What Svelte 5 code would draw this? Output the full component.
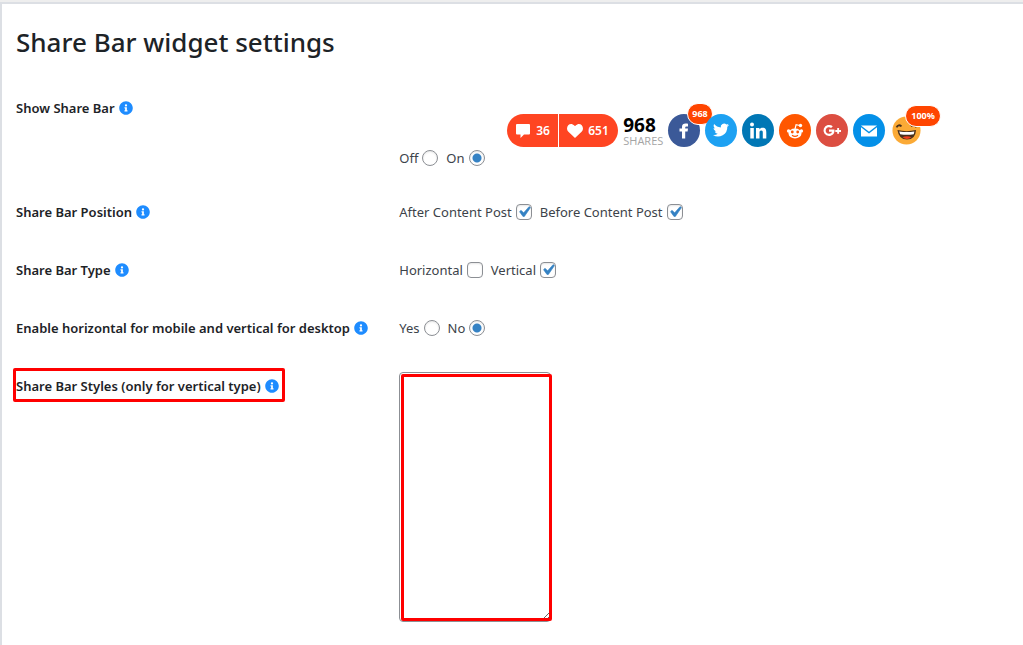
<script lang="ts">
  interface Option {
    label: string;
    value: string;
  }

  interface Setting {
    id: string;
    title: string;
    type: 'radio' | 'checkbox';
    options: Option[];
    preview?: boolean;
  }

  const settings: Setting[] = [
    {
      id: 'show',
      title: 'Show Share Bar',
      type: 'radio',
      options: [
        { label: 'Off', value: 'off' },
        { label: 'On', value: 'on' },
      ],
      preview: true,
    },
    {
      id: 'position',
      title: 'Share Bar Position',
      type: 'checkbox',
      options: [
        { label: 'After Content Post', value: 'after' },
        { label: 'Before Content Post', value: 'before' },
      ],
    },
    {
      id: 'type',
      title: 'Share Bar Type',
      type: 'checkbox',
      options: [
        { label: 'Horizontal', value: 'horizontal' },
        { label: 'Vertical', value: 'vertical' },
      ],
    },
    {
      id: 'responsive',
      title: 'Enable horizontal for mobile and vertical for desktop',
      type: 'radio',
      options: [
        { label: 'Yes', value: 'yes' },
        { label: 'No', value: 'no' },
      ],
    },
  ];

  let selected: Record<string, string[]> = $state({
    show: ['on'],
    position: ['after', 'before'],
    type: ['vertical'],
    responsive: ['no'],
  });
  let styles = $state('');

  function toggle(s: Setting, value: string) {
    if (s.type === 'radio') {
      selected[s.id] = [value];
    } else if (selected[s.id].includes(value)) {
      selected[s.id] = selected[s.id].filter((v) => v !== value);
    } else {
      selected[s.id] = [...selected[s.id], value];
    }
  }
</script>

{#snippet info()}
  <svg class="info" viewBox="0 0 512 512" aria-hidden="true">
    <path
      d="M256 8C119 8 8 119 8 256s111 248 248 248 248-111 248-248S393 8 256 8zm0 110a42 42 0 1 1 0 84 42 42 0 0 1 0-84zm56 254c0 6.600-5.400 12-12 12h-88c-6.600 0-12-5.400-12-12v-24c0-6.600 5.400-12 12-12h12v-64h-12c-6.600 0-12-5.400-12-12v-24c0-6.600 5.400-12 12-12h64c6.600 0 12 5.400 12 12v100h12c6.600 0 12 5.400 12 12v24z"
    />
  </svg>
{/snippet}

<main class="panel">
  <h1>Share Bar widget settings</h1>

  {#each settings as s (s.id)}
    <div class="row" class:with-preview={s.preview}>
      <div class="name" id={`name-${s.id}`}>{s.title}{@render info()}</div>
      <div class="control">
        {#if s.preview}
          <div class="share-bar">
            <div class="pill">
              <span class="count">
                <svg viewBox="0 0 14 14" aria-hidden="true">
                  <path d="M1 0h12q1 0 1 1v8.500q0 1-1 1H8L4.500 14v-3.500H1q-1 0-1-1V1q0-1 1-1z" />
                </svg>
                36
              </span>
              <span class="count likes">
                <svg viewBox="0 0 16 14" aria-hidden="true">
                  <path d="M8 14L1.400 7.800C-2 4 1.500-1.200 5.700.4 6.800.8 7.500 1.400 8 2.200 8.500 1.400 9.200.8 10.300.4 14.500-1.200 18 4 14.600 7.800z" />
                </svg>
                651
              </span>
            </div>
            <div class="total"><strong>968</strong><span>SHARES</span></div>
            <span class="social facebook">
              <svg viewBox="0 0 32 32" aria-hidden="true">
                <path d="M14 24v-7h-2.500v-3H14v-1.800C14 9.800 15.500 9 17.500 9c1.100 0 1.900.1 2.500.2v2.700h-1.300c-1.100 0-1.500.5-1.500 1.300V14H20l-.4 3h-2.400v7z" />
              </svg>
              <span class="badge">968</span>
            </span>
            <span class="social twitter">
              <svg viewBox="0 0 32 32" aria-hidden="true">
                <path d="M24 10.500c-.6.3-1.200.5-1.900.5.7-.4 1.200-1 1.400-1.800-.6.4-1.300.6-2.100.8a3.300 3.300 0 0 0-5.600 3c-2.700-.1-5.100-1.400-6.700-3.400-.9 1.500-.4 3.400 1 4.400-.5 0-1-.2-1.500-.4 0 1.600 1.100 2.900 2.600 3.300-.5.100-.9.100-1.400 0 .4 1.300 1.600 2.200 3 2.300A6.600 6.600 0 0 1 8 20.500a9.300 9.300 0 0 0 14.300-8.300c.7-.4 1.200-1 1.700-1.700z" />
              </svg>
            </span>
            <span class="social linkedin">
              <svg viewBox="0 0 32 32" aria-hidden="true">
                <circle cx="10" cy="10" r="2" />
                <path d="M8.300 13.500h3.500V24H8.300zM14 13.500h3.400V15c.6-1.100 1.700-1.700 3.200-1.700 3 0 3.700 2 3.700 4.700v6h-3.500v-5.400c0-1.300 0-2.500-1.600-2.500s-1.700 1.200-1.700 2.500V24H14z" />
              </svg>
            </span>
            <span class="social reddit">
              <svg viewBox="0 0 32 32" aria-hidden="true">
                <ellipse cx="16" cy="19" rx="6.500" ry="5" />
                <circle cx="9.600" cy="16.500" r="1.700" />
                <circle cx="22.400" cy="16.500" r="1.700" />
                <circle cx="21.500" cy="11" r="1.700" />
                <path class="line" d="M16 14.500l1.100-4.400 3.700.9" />
                <circle class="eye" cx="13.300" cy="17.500" r="1.400" />
                <circle class="eye" cx="18.700" cy="17.500" r="1.400" />
                <path class="smile" d="M13 20.700q3 2.200 6 0" />
              </svg>
            </span>
            <span class="social google">
              <svg viewBox="0 0 32 32" aria-hidden="true">
                <path d="M13 15v2.300h3c-.3 1.200-1.300 2-3 2a3.300 3.300 0 1 1 2.100-5.800l1.700-1.700A5.600 5.600 0 1 0 13 21.600c3.300 0 5.500-2.300 5.500-5.500l-.1-1.100zM21.200 13.500h1.900v2h1.900v1.900h-1.900v1.900h-1.900v-1.900h-1.900v-1.900h1.900z" />
              </svg>
            </span>
            <span class="social mail">
              <svg viewBox="0 0 32 32" aria-hidden="true">
                <path d="M8 11h16l-8 6.300zM8 12.700l8 6.300 8-6.300V22H8z" />
              </svg>
            </span>
            <span class="social emoji">
              <svg viewBox="0 0 32 32" aria-hidden="true">
                <circle class="face" cx="16" cy="16" r="15.500" />
                <path class="brow" d="M5 12.500q2-4 5.500-1M21 11.500q3-3 6 1" />
                <path class="mouth" d="M6 15.500q10 2.500 20.500 0Q26 26 16.500 26 7.500 26 6 15.500z" />
                <path class="teeth" d="M8 17q8.500 1.500 16.700 0l-.7 3q-7.500 1.300-15 0z" />
                <path class="tongue" d="M11.500 23.500q5-2.500 10 0-5 3.500-10 0z" />
              </svg>
              <span class="badge">100%</span>
            </span>
          </div>
        {/if}
        <div class="options" role="group" aria-labelledby={`name-${s.id}`}>
          {#each s.options as o (o.value)}
            <label>
              {o.label}
              <input
                type={s.type}
                name={s.id}
                value={o.value}
                checked={selected[s.id].includes(o.value)}
                onchange={() => toggle(s, o.value)}
              />
            </label>
          {/each}
        </div>
      </div>
    </div>
  {/each}

  <div class="row">
    <label class="name" for="styles">
      <span class="marked">Share Bar Styles (only for vertical type){@render info()}</span>
    </label>
    <div class="control">
      <div class="editor"><textarea id="styles" bind:value={styles}></textarea></div>
    </div>
  </div>
</main>

<style>
  :global(body) {
    background: #eee;
  }

  .panel {
    box-sizing: border-box;
    margin-top: 2px;
    min-height: calc(100vh - 2px);
    padding: 20px 14px;
    border: 2px solid #dcdfe4;
    border-right: 0;
    border-bottom: 0;
    background: #fff;
    color: #1d2327;
    font: 13px/20px 'Segoe UI', 'Noto Sans', sans-serif;
  }

  h1 {
    margin: 0 0 38px;
    font-size: 26px;
    line-height: 36px;
    font-weight: 500;
  }

  .row {
    display: grid;
    grid-template-columns: 22fr 35fr;
    align-items: start;
    margin-bottom: 38px;
  }

  .with-preview {
    margin-bottom: 34px;
  }

  .row:last-child {
    margin-bottom: 0;
  }

  .name {
    font-weight: 600;
  }

  .info {
    width: 14px;
    height: 14px;
    margin-left: 4px;
    vertical-align: -2px;
    fill: #1e8cff;
  }

  .marked {
    position: relative;
    display: inline-block;
  }

  .marked::after,
  .editor::after {
    content: '';
    position: absolute;
    border: 3px solid #f00;
    border-radius: 2px;
    pointer-events: none;
  }

  .marked::after {
    inset: -8px -6px -6px -3px;
  }

  .options {
    display: flex;
    gap: 8px;
    color: #3c434a;
  }

  .options label {
    display: flex;
    align-items: center;
    gap: 4px;
  }

  input {
    appearance: none;
    box-sizing: border-box;
    width: 16px;
    height: 16px;
    margin: 0;
    border: 1px solid #8c8f94;
    border-radius: 4px;
    background: #fff;
    box-shadow: inset 0 1px 2px rgba(0, 0, 0, 0.1);
  }

  input[type='radio'] {
    border-radius: 50%;
  }

  input[type='radio']:checked {
    background: radial-gradient(circle, #3582c4 0 4px, #fff 5px);
  }

  input[type='checkbox']:checked {
    background: url("data:image/svg+xml,%3Csvg xmlns='http://www.w3.org/2000/svg' viewBox='0 0 20 20'%3E%3Cpath d='M14.83 4.890l1.340.940-5.810 8.380H9.020L5.780 9.670l1.340-1.250 2.570 2.400z' fill='%233582c4' stroke='%233582c4' stroke-width='.6'/%3E%3C/svg%3E")
      center / 21px no-repeat;
  }

  .editor {
    position: relative;
    width: 152px;
    margin-top: -4px;
  }

  .editor::after {
    inset: 2px -1px 1px 2px;
  }

  textarea {
    display: block;
    box-sizing: border-box;
    width: 100%;
    height: 250px;
    padding: 2px 6px;
    border: 1px solid #8c8f94;
    border-radius: 4px;
    font: inherit;
  }

  .share-bar {
    display: flex;
    align-items: center;
    gap: 5px;
    height: 33px;
    margin-left: 108px;
    padding: 16px 0 1px;
  }

  .pill {
    display: flex;
    gap: 1px;
    height: 33px;
    border-radius: 17px;
    overflow: hidden;
    color: #fff;
    font-weight: 600;
  }

  .count {
    box-sizing: border-box;
    display: flex;
    align-items: center;
    gap: 6px;
    width: 51px;
    padding-left: 9px;
    background: #ff4522;
    font-size: 12px;
  }

  .count svg {
    width: 14px;
    height: 14px;
    fill: #fff;
  }

  .likes {
    width: 59px;
    padding-left: 8px;
    gap: 5px;
  }

  .likes svg {
    width: 16px;
  }

  .total {
    display: flex;
    flex-direction: column;
    width: 40px;
    color: #a5a5a5;
    font-family: 'Open Sans', sans-serif;
    font-size: 11px;
    line-height: 12px;
  }

  .total strong {
    color: #000;
    font-size: 19px;
    line-height: 20px;
  }

  .social {
    position: relative;
    width: 32px;
    height: 33px;
    border-radius: 50%;
    fill: #fff;
  }

  .social svg {
    display: block;
    width: 100%;
    height: 100%;
  }

  .facebook {
    background: #3b5998;
  }

  .twitter {
    background: #1da1f2;
  }

  .linkedin {
    background: #0077b5;
  }

  .reddit {
    background: #ff5700;
  }

  .google {
    background: #dc4e41;
  }

  .mail {
    background: #0490e8;
  }

  .line,
  .smile,
  .brow {
    fill: none;
    stroke: #fff;
    stroke-width: 1.2;
  }

  .eye {
    fill: #ff5700;
  }

  .smile {
    stroke: #ff5700;
  }

  .emoji {
    width: 29px;
    height: 29px;
    margin-left: 2px;
  }

  .face {
    fill: #fbaa36;
  }

  .brow {
    stroke: #49301c;
    stroke-width: 2;
  }

  .mouth {
    fill: #49301c;
  }

  .teeth {
    fill: #fff;
  }

  .tongue {
    fill: #f2401d;
  }

  .badge {
    position: absolute;
    left: 19px;
    top: -11px;
    padding: 0 4px;
    border: 1px solid #fff;
    border-radius: 12px;
    background: #ff4500;
    color: #fff;
    font-size: 9px;
    line-height: 20px;
    font-weight: 700;
  }

  .emoji .badge {
    left: 13px;
    padding: 0 5px;
  }
</style>
